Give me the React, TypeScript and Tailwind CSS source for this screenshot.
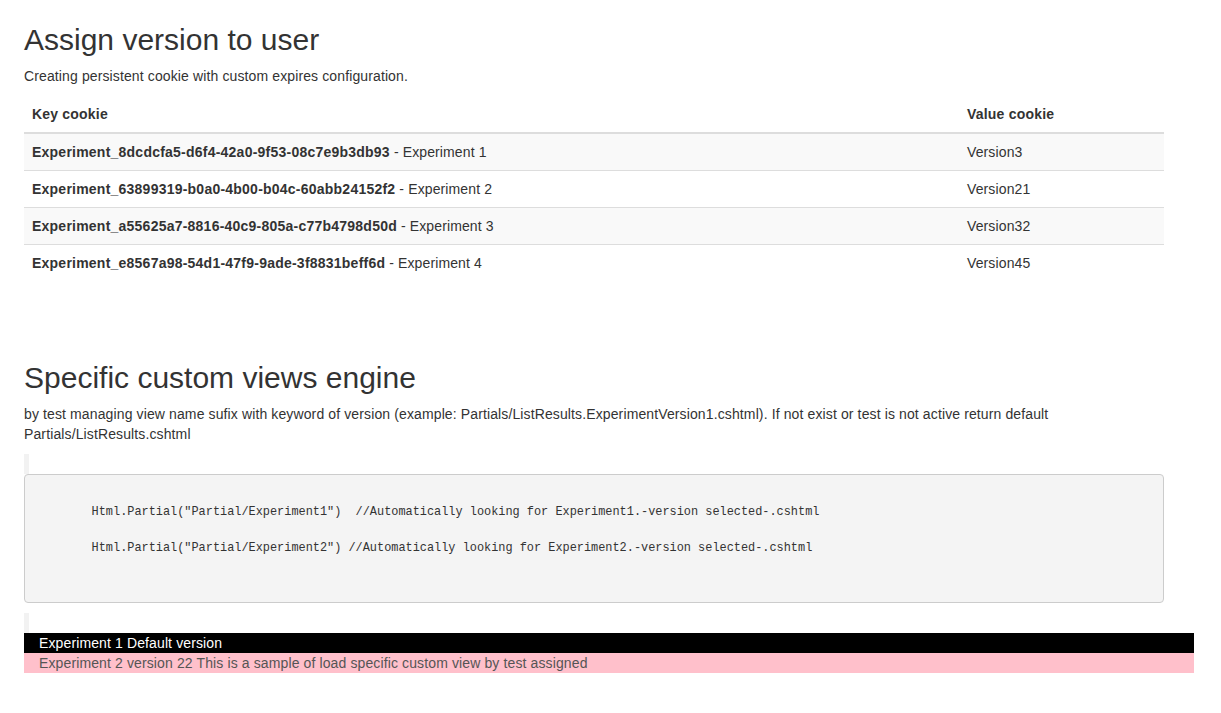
const cookies = [
  {
    key: "Experiment_8dcdcfa5-d6f4-42a0-9f53-08c7e9b3db93",
    name: "Experiment 1",
    value: "Version3",
  },
  {
    key: "Experiment_63899319-b0a0-4b00-b04c-60abb24152f2",
    name: "Experiment 2",
    value: "Version21",
  },
  {
    key: "Experiment_a55625a7-8816-40c9-805a-c77b4798d50d",
    name: "Experiment 3",
    value: "Version32",
  },
  {
    key: "Experiment_e8567a98-54d1-47f9-9ade-3f8831beff6d",
    name: "Experiment 4",
    value: "Version45",
  },
];

const code = `
        Html.Partial("Partial/Experiment1")  //Automatically looking for Experiment1.-version selected-.cshtml

        Html.Partial("Partial/Experiment2") //Automatically looking for Experiment2.-version selected-.cshtml


`;

const App = () => {
  return (
    <div className="min-h-screen bg-white pl-[24px] pt-[23px] font-['Liberation_Sans',Arial,sans-serif] text-[14px] leading-[20px] tracking-[0.12px] text-[#333]">
      <div className="w-[1140px]">
        <h2 className="mb-[10px] text-[30px] leading-[33px] font-normal tracking-normal">
          Assign version to user
        </h2>
        <p className="mb-[10px]">
          Creating persistent cookie with custom expires configuration.
        </p>
        <table className="mb-[20px] w-full border-collapse">
          <thead>
            <tr>
              <th className="border-b-2 border-[#ddd] p-[8px] text-left font-bold tracking-[0.2px]">
                Key cookie
              </th>
              <th className="w-[205px] border-b-2 border-[#ddd] p-[8px] text-left font-bold tracking-[0.2px]">
                Value cookie
              </th>
            </tr>
          </thead>
          <tbody>
            {cookies.map((c, i) => (
              <tr key={c.key} className={i % 2 === 0 ? "bg-[#f9f9f9]" : ""}>
                <td
                  className={`p-[8px] ${i > 0 ? "border-t border-[#ddd]" : ""}`}
                >
                  <b className="tracking-[0.23px]">{c.key}</b> - {c.name}
                </td>
                <td
                  className={`p-[8px] ${i > 0 ? "border-t border-[#ddd]" : ""}`}
                >
                  {c.value}
                </td>
              </tr>
            ))}
          </tbody>
        </table>

        <h2 className="mt-[80px] mb-[10px] text-[30px] leading-[33px] font-normal tracking-normal">
          Specific custom views engine
        </h2>
        <p className="mb-[10px]">
          by test managing view name sufix with keyword of version (example:
          Partials/ListResults.ExperimentVersion1.cshtml). If not exist or test
          is not active return default Partials/ListResults.cshtml
        </p>
        <div className="h-[20px] border-l-[5px] border-[#f2f2f2]" />
        <pre className="mb-[10px] rounded border border-[#ccc] bg-[#f4f4f4] p-[9.5px] font-['Liberation_Mono',monospace] text-[11.9px] leading-[18px] tracking-normal text-[#333]">
          {code}
        </pre>
        <div className="h-[20px] border-l-[5px] border-[#f2f2f2]" />
      </div>
      <div className="w-[1170px]">
        <div className="bg-black pl-[15px] text-white">
          Experiment 1 Default version
        </div>
        <div className="bg-[#ffc0cb] pl-[15px] text-[#555]">
          Experiment 2 version 22 This is a sample of load specific custom view
          by test assigned
        </div>
      </div>
    </div>
  );
};

export default App;
